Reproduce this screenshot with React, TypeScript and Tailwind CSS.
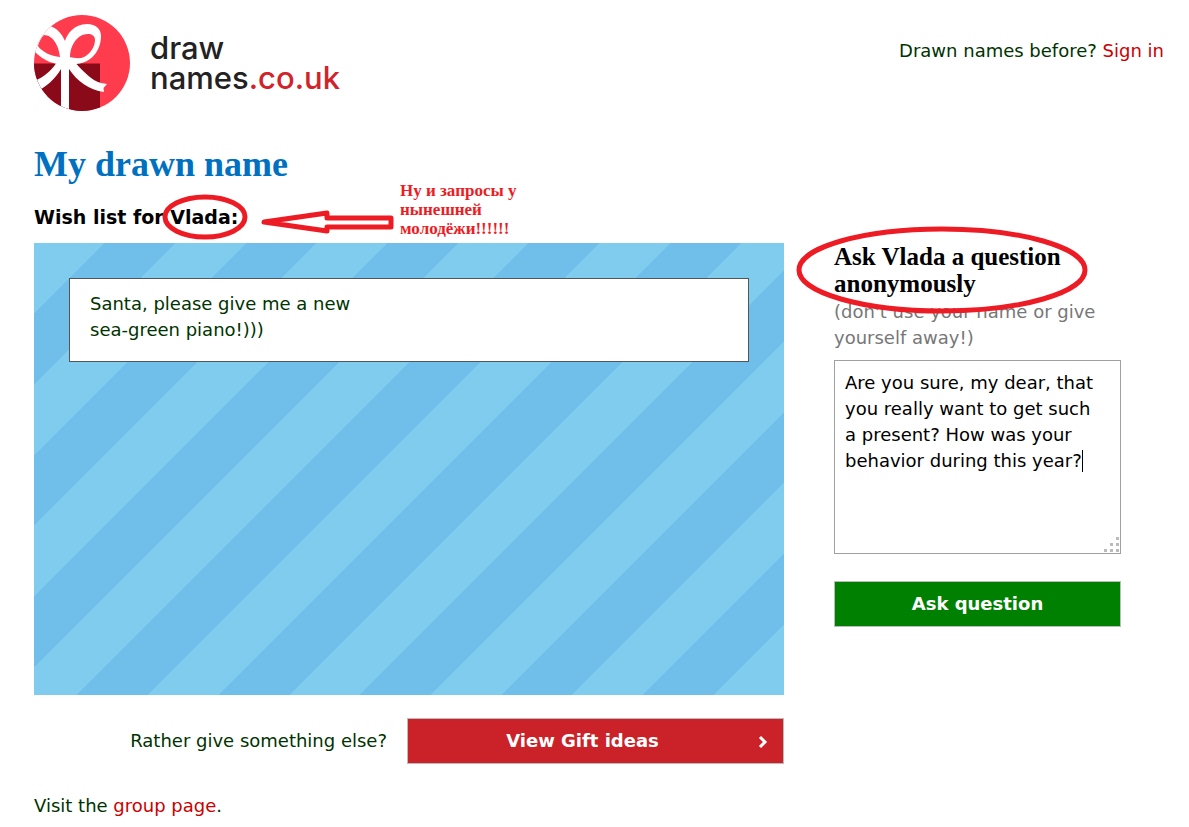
import React from "react";

function Logo() {
  return (
    <a href="#home" aria-label="drawnames.co.uk" className="flex items-center gap-5">
      <svg viewBox="0 0 96 96" className="h-24 w-24" aria-hidden="true">
        <defs>
          <clipPath id="disc">
            <circle cx="48" cy="48" r="48" />
          </clipPath>
        </defs>
        <g clipPath="url(#disc)">
          <rect width="96" height="96" fill="#ff3b4e" />
          <rect y="48.5" width="66" height="48" fill="#8b0a1a" />
          <g fill="#fff" fillRule="evenodd">
            {/* left loop */}
            <path d="M0 8L16 11C23 13 28 19 31 26L36 44L30 50L21 48.5C14 47 7 43 0 36ZM4 31C8 37 17 41 26 42C25 31 19 20 10 20C8 22 5 26 4 31Z" />
            {/* right loop */}
            <path d="M31 26C33 19 40 9 53 9C62 9 67 14 67 21C67 30 63 39 56 44C52 47 47 48.5 42 49L30 50L28 40ZM36 42C36 34 39 27 45 22C50 18 61 17 61 25C61 32 56 39 50 42C46 44 40 43 36 42Z" />
            {/* ribbon tails */}
            <path d="M22 48.5C17 56 10 62 0 66V77C12 73 21 64 27 54V96H35V54C43 66 55 75 70 77L69.500 73L73 69L67 68C57 65 50 57 42 48.500L32 44Z" />
          </g>
        </g>
      </svg>
      <span className="font-['Inter',sans-serif] text-[31px] leading-[30px] font-medium text-[#222]">
        draw
        <br />
        names<span className="text-[#d2232a]">.co.uk</span>
      </span>
    </a>
  );
}

function Arrow() {
  return (
    <svg width="134" height="26" viewBox="0 0 134 26" className="absolute left-[226px] top-[5px]" aria-hidden="true">
      <path
        d="M4 13L67 4V9H131V18H67V22Z"
        fill="none"
        stroke="#ed1c24"
        strokeWidth="5"
        strokeLinejoin="round"
      />
    </svg>
  );
}

function WishList() {
  return (
    <section className="min-w-0 flex-1">
      <div className="flex h-[452px] flex-col bg-[repeating-linear-gradient(135deg,#80ccee_0px,#80ccee_50px,#70beea_50px,#70beea_100px)] p-[35px]">
        <div className="border border-[#555] bg-white px-5 pb-[18px] pt-3">
          Santa, please give me a new
          <br />
          sea-green piano!)))
        </div>
      </div>
      <div className="mt-[23px] flex items-center justify-end gap-5">
        <span>Rather give something else?</span>
        <button
          type="button"
          className="relative h-[46px] w-[377px] border border-[#bbb] bg-[#cb2229] pr-[26px] font-bold text-white"
        >
          View Gift ideas
          <svg width="10" height="14" viewBox="0 0 10 14" className="absolute right-[15px] top-4" aria-hidden="true">
            <path d="M2 2L7 7L2 12" fill="none" stroke="#fff" strokeWidth="3" />
          </svg>
        </button>
      </div>
    </section>
  );
}

function AskQuestion() {
  return (
    <form className="w-[287px] shrink-0" onSubmit={(e) => e.preventDefault()}>
      <div className="relative">
        <h2 className="font-['Liberation_Serif',serif] text-[25px] leading-[27px] font-bold text-black">
          Ask Vlada a question anonymously
        </h2>
        <svg
          width="292"
          height="88"
          viewBox="0 0 292 88"
          className="absolute -left-[38px] -top-[17px] z-10"
          aria-hidden="true"
        >
          <ellipse cx="146" cy="44" rx="143" ry="41" fill="none" stroke="#ed1c24" strokeWidth="5" />
        </svg>
      </div>
      <label htmlFor="question" className="mt-0.5 block text-[#777]">
        (don't use your name or give yourself away!)
      </label>
      <div className="relative mt-[9px]">
        <textarea
          id="question"
          className="block h-[194px] w-full resize-none overflow-hidden border border-[#a0a0a0] bg-white py-[9px] pl-2.5 pr-6 text-black outline-none"
          defaultValue="Are you sure, my dear, that you really want to get such a present? How was your behavior during this year?"
        />
        <span className="absolute left-[248px] top-[90px] h-[22px] w-px bg-black" />
        <svg width="15" height="15" viewBox="0 0 15 15" className="absolute bottom-0.5 right-0.5" fill="#bbb" aria-hidden="true">
          <path d="M12 0h3v3h-3zM6 6h3v3H6zM12 6h3v3h-3zM0 12h3v3H0zM6 12h3v3H6zM12 12h3v3h-3z" />
        </svg>
      </div>
      <button type="submit" className="mt-[27px] h-[46px] w-full border border-[#bbb] bg-[#008000] font-bold text-white">
        Ask question
      </button>
    </form>
  );
}

export default function App() {
  return (
    <div className="min-h-screen bg-white pl-[34px] font-['DejaVu_Sans',sans-serif] text-[18px] leading-[26px] text-[#003300]">
      <header className="flex items-start justify-between pr-[25px] pt-[15px]">
        <Logo />
        <p className="pt-[23px]">
          Drawn names before?{" "}
          <a href="#signin" className="text-[#cc0000]">
            Sign in
          </a>
        </p>
      </header>
      <main className="pr-[68px]">
        <h1 className="mt-[33px] font-['Liberation_Serif',serif] text-[36px] leading-10 font-bold text-[#0070c0]">
          My drawn name
        </h1>
        <div className="relative mt-5 mb-[13px]">
          <p className="text-[19px] font-bold text-black">
            Wish list for{" "}
            <span className="relative">
              Vlada:
              <svg
                width="86"
                height="47"
                viewBox="0 0 86 47"
                className="absolute -left-2 -top-3"
                aria-hidden="true"
              >
                <ellipse cx="43" cy="23" rx="40" ry="20" fill="none" stroke="#ed1c24" strokeWidth="5" />
              </svg>
            </span>
          </p>
          <Arrow />
          <p className="absolute -top-[23px] left-[366px] w-[140px] font-['Liberation_Serif',serif] text-[17px] leading-[19px] font-bold text-[#ed1c24]">
            Ну и запросы у нынешней молодёжи!!!!!!
          </p>
        </div>
        <div className="flex gap-[50px]">
          <WishList />
          <AskQuestion />
        </div>
        <p className="mt-[29px]">
          Visit the{" "}
          <a href="#group" className="text-[#cc0000]">
            group page
          </a>
          .
        </p>
      </main>
    </div>
  );
}
